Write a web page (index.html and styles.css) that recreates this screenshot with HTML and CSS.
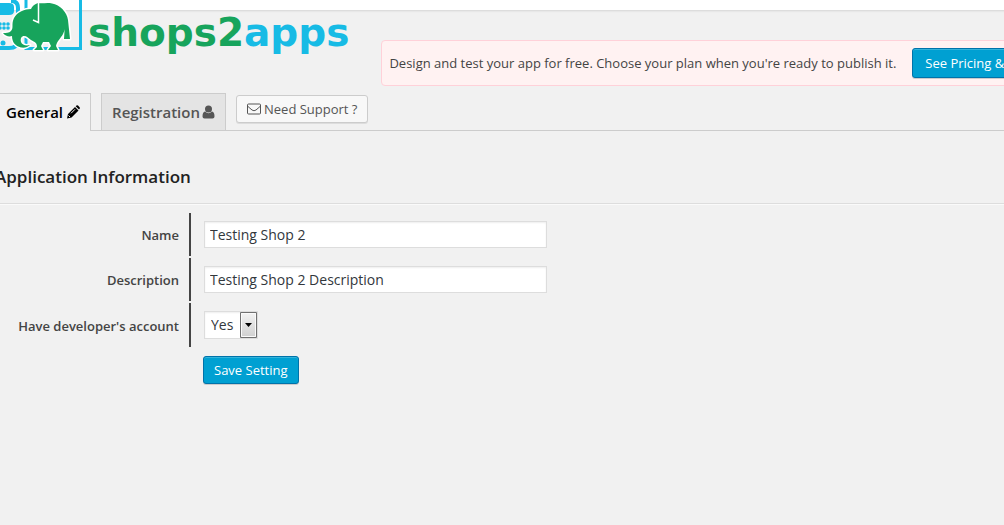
FILE: index.html
```html
<!DOCTYPE html>
<html lang="en">
<head>
<meta charset="utf-8">
<title>shops2apps</title>
<link rel="stylesheet" href="styles.css">
</head>
<body>
<div class="topbar"></div>
<div class="page">
  <header class="header">
    <a class="logo" href="#">
      <svg class="logo-mark" width="82" height="62" viewBox="0 0 82 62" aria-hidden="true">
        <path fill="#fff" d="M0 0H80V10H0Z"/>
        <g fill="none" stroke="#17bbe5" stroke-width="3">
          <path d="M26 0V48.500H80.500V0"/>
          <path stroke-width="4" d="M0 48H9Q18 48 18 40V8Q18 1 11 1"/>
        </g>
        <path fill="#17bbe5" d="M0 3H9Q14 3 14 7V11Q14 15 9 15H0Z"/>
        <g fill="#17bbe5">
          <circle cx="4" cy="24" r="1.800"/><circle cx="8" cy="24" r="1.800"/>
          <circle cx="0" cy="24" r="1.800"/><circle cx="0" cy="28" r="1.800"/>
          <circle cx="4" cy="28" r="1.800"/><circle cx="8" cy="28" r="1.800"/>
          <circle cx="3" cy="43" r="2.500"/>
        </g>
        <path fill="#17a45c" stroke="#fff" stroke-width="3" stroke-linejoin="round" paint-order="stroke" d="M38 3C35 4 32 6 31 9C25 9 17 12 14 18C11 24 14 28 11 31C9 33 6 33 3 33C5 36 9 37 12 36C12 42 15 46 21 47.500C25 48 28 47 30 45C26 46 22 45 21 42C20 38 22 36 24 36C27 36 28 38 31 40C35 42 37 43 37 47L34 50H43L41 46L43 42H49L51 46L48 50H58L56 46C57 41 61 38 63 34C65 30 65 27 65 24L64 39L70 39L68 20C67 12 60 5 52 3.500C47 2 43 4 38 3Z"/>
        <path fill="none" stroke="#fff" stroke-width="1.500" d="M38.500 3V22.500L33 20"/>
      </svg>
      <span class="wordmark">shops2<span class="wordmark-end">apps</span></span>
    </a>
    <div class="notice">
      <span>Design and test your app for free. Choose your plan when you're ready to publish it.</span>
      <button class="button primary pricing" type="button">See Pricing &amp;</button>
    </div>
  </header>
  <nav class="tabs">
    <a class="tab active" href="#general">General
      <svg width="13" height="14" viewBox="0 0 13 14" aria-hidden="true"><path fill="currentColor" d="M0 13.500L1 9L8 2L11.500 5.500L4.500 12.500ZM8.700 1.300L9.500 .5Q10.300 0 11 .6L12.600 2.200Q13.200 3 12.600 3.800L12 4.600Z"/><path fill="none" stroke="#f1f1f1" d="M1.500 10.500L3 12M4 8.300L8 4.300"/></svg>
    </a>
    <a class="tab registration" href="#registration">Registration
      <svg width="13" height="14" viewBox="0 0 13 14" aria-hidden="true"><path fill="currentColor" d="M3 4Q3 .5 6.500 .5T10 4Q10 7.500 6.500 7.500T3 4ZM3 6.500Q6.500 10 10 6.500Q12.500 7 12.500 11.500Q12.500 13.500 10.500 13.500H2.500Q.5 13.500 .5 11.500Q.5 7 3 6.500Z"/></svg>
    </a>
    <button class="button support" type="button">
      <svg width="14" height="12" viewBox="0 0 14 12" aria-hidden="true"><path fill="none" stroke="currentColor" d="M1.500 1H12.500Q13.500 1 13.500 2V10Q13.500 11 12.500 11H1.500Q.5 11 .5 10V2Q.5 1 1.500 1ZM.5 3Q1.500 4 5 7Q7 8.500 9 7Q12.500 4 13.500 3"/></svg>
      Need Support ?
    </button>
  </nav>
  <main>
    <h2 class="heading">Application Information</h2>
    <form class="form">
      <div class="row">
        <label class="label" for="name">Name</label>
        <input class="field" id="name" type="text" value="Testing Shop 2">
      </div>
      <div class="row">
        <label class="label" for="description">Description</label>
        <input class="field" id="description" type="text" value="Testing Shop 2 Description">
      </div>
      <div class="row">
        <label class="label select-label" for="account">Have developer's account</label>
        <span class="select">
          <select class="choice" id="account"><option>Yes</option><option>No</option></select>
          <svg class="arrow" width="17" height="26" viewBox="0 0 17 26" aria-hidden="true">
            <defs><linearGradient id="face" x2="0" y2="1"><stop stop-color="#f3f3f3"/><stop offset="1" stop-color="#cfcfcf"/></linearGradient></defs>
            <path fill="url(#face)" stroke="#707070" d="M.5 .5H16.500V25.500H.5Z"/>
            <path fill="none" stroke="#fafafa" d="M1.500 1.500H15.500V24.500H1.500Z"/>
            <path d="M5 11H12L8.500 15Z"/>
          </svg>
        </span>
      </div>
      <div class="actions"><button class="button primary" type="button">Save Setting</button></div>
    </form>
  </main>
</div>
</body>
</html>
```
FILE: styles.css
```css
* { box-sizing: border-box; }
body {
  margin: 0;
  min-height: 100vh;
  overflow-x: hidden;
  background: #f1f1f1;
  color: #444;
  font: 13px/20px "Open Sans", sans-serif;
}
.topbar {
  height: 11px;
  background: #fff;
  border-bottom: 1px solid #ddd;
  box-shadow: 0 1px 1px #e8e8e8;
}
.header {
  display: flex;
  align-items: flex-start;
  gap: 32px;
  height: 82px;
}
.logo {
  display: flex;
  flex: none;
  position: relative;
  margin-top: -11px;
  gap: 6px;
  text-decoration: none;
}
.wordmark {
  padding-top: 9px;
  color: #17a45c;
  font: bold 39px/48px "DejaVu Sans", sans-serif;
}
.wordmark-end { color: #17bbe5; }
.notice {
  display: flex;
  flex: none;
  align-items: center;
  gap: 16px;
  margin-top: 29px;
  padding: 7px;
  border: 1px solid #ffd1d9;
  border-radius: 4px;
  background: #fff2f2;
  white-space: nowrap;
}
.button {
  height: 28px;
  padding: 0 10px;
  border: 1px solid #ccc;
  border-radius: 3px;
  background: #f8f8f8;
  color: #555;
  font: 13px/20px "Open Sans", sans-serif;
  box-shadow: 0 1px 0 #ddd;
}
.primary {
  border-color: #0073aa;
  background: #00a0d2;
  color: #fff;
  box-shadow: inset 0 1px 0 #33b3db, 0 1px 0 #ccc;
}
.pricing { height: 30px; padding: 0 12px; }
.tabs {
  display: flex;
  gap: 10px;
  border-bottom: 1px solid #ccc;
}
.tab {
  display: flex;
  align-items: center;
  gap: 4px;
  height: 37px;
  padding: 0 10px;
  border: 1px solid #ccc;
  border-bottom: 0;
  background: #e4e4e4;
  color: #555;
  font-size: 15px;
  font-weight: 600;
  text-decoration: none;
}
.active {
  height: 38px;
  margin-bottom: -1px;
  padding: 0 10px 2px 6px;
  border-left: 0;
  background: #f1f1f1;
  color: #000;
}
.registration { gap: 2px; }
.support {
  display: flex;
  align-items: center;
  gap: 3px;
  margin-top: 2px;
}
.heading {
  margin: 0 0 0 -5px;
  padding: 34px 0 14px;
  border-bottom: 1px solid #ddd;
  box-shadow: 0 1px 0 #fafafa;
  color: #222;
  font-size: 17px;
  font-weight: 600;
  line-height: 24px;
}
.form {
  display: grid;
  gap: 2px;
  padding-top: 9px;
}
.row {
  display: grid;
  grid-template-columns: 191px 1fr;
  align-items: center;
  gap: 13px;
}
.label {
  padding: 12px 10px 11px 0;
  border-right: 2px solid #444;
  font-weight: 600;
  text-align: right;
}
.select-label { padding-top: 13px; }
.field, .choice {
  height: 27px;
  padding: 0 5px;
  border: 1px solid #ddd;
  border-radius: 0;
  background: #fff;
  color: #32373c;
  font: 14px/20px "Open Sans", sans-serif;
  box-shadow: inset 0 1px 2px #eee;
}
.field { width: 100%; max-width: 343px; }
.select {
  display: flex;
  position: relative;
  width: 54px;
}
.choice {
  width: 100%;
  height: 28px;
  padding: 0 6px;
  appearance: none;
}
.arrow {
  position: absolute;
  top: 1px;
  right: 1px;
  pointer-events: none;
}
.actions { padding: 7px 0 0 203px; }
```
